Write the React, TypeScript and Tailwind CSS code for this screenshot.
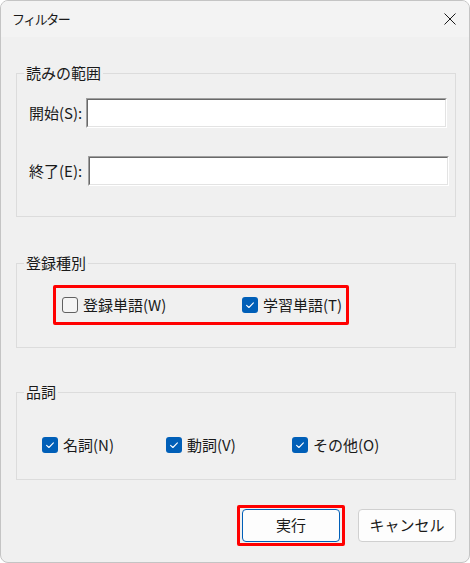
import React from 'react';

function CheckBox({ checked }: { checked: boolean }) {
  if (checked) {
    return (
      <span className="flex h-[16px] w-[16px] shrink-0 items-center justify-center rounded-[3px] bg-[#005fb8]">
        <svg width="16" height="16" viewBox="0 0 16 16" fill="none">
          <path d="M4.6 8.3 L6.9 10.5 L11.4 5.9" stroke="#ffffff" strokeWidth="1.1" strokeLinecap="round" strokeLinejoin="round" />
        </svg>
      </span>
    );
  }
  return <span className="h-[16px] w-[16px] shrink-0 rounded-[3px] border border-[#616161] bg-[#f5f5f5]" />;
}

function Check({ label, checked }: { label: string; checked: boolean }) {
  return (
    <label className="flex items-center gap-[5px] text-[15px] leading-[20px] text-[#1a1a1a]">
      <CheckBox checked={checked} />
      <span>{label}</span>
    </label>
  );
}

function Group({ title, children }: { title: string; children: React.ReactNode }) {
  return (
    <fieldset className="w-full border border-[#dcdcdc]">
      <legend className="ml-[7px] px-[2px] text-[15px] leading-[20px] text-[#1a1a1a]">{title}</legend>
      {children}
    </fieldset>
  );
}

function TextBox({ className }: { className: string }) {
  return (
    <div className={`h-[30px] border border-t-[#a0a0a0] border-l-[#a0a0a0] border-b-white border-r-white ${className}`}>
      <div className="h-full w-full border border-t-[#696969] border-l-[#696969] border-b-[#e3e3e3] border-r-[#e3e3e3] bg-white" />
    </div>
  );
}

export default function App() {
  return (
    <div className="h-[563px] w-[470px] bg-white font-['Noto_Sans_CJK_JP',sans-serif]">
      <div className="flex h-full w-full flex-col overflow-hidden rounded-[8px] border border-[#c4c4c4] bg-[#f0f0f0]">
        <div className="flex h-[36px] shrink-0 items-center justify-between bg-[#f3f3f3] pl-[11px] pr-[13px]">
          <span className="text-[13px] leading-[16px] tracking-[-1.5px] text-[#1a1a1a]">フィルター</span>
          <svg width="12" height="12" viewBox="0 0 12 12" fill="none">
            <path d="M0.5 0.5 L11.5 11.5 M11.5 0.5 L0.5 11.5" stroke="#1a1a1a" strokeWidth="1" />
          </svg>
        </div>

        <div className="flex flex-col pl-[15px] pr-[13px] pt-[26px]">
          <Group title="読みの範囲">
            <div className="flex flex-col gap-[28px] pb-[30px] pl-[12px] pt-[15px]">
              <div className="flex items-center">
                <span className="w-[57px] text-[15px] leading-[20px] text-[#1a1a1a]">開始(S):</span>
                <TextBox className="w-[361px]" />
              </div>
              <div className="flex items-center">
                <span className="w-[59px] text-[15px] leading-[20px] text-[#1a1a1a]">終了(E):</span>
                <TextBox className="w-[361px]" />
              </div>
            </div>
          </Group>

          <div className="mt-[36px]">
            <Group title="登録種別">
              <div className="pb-[22px] pl-[36px] pt-[12px]">
                <div className="flex h-[40px] w-[296px] items-center rounded-[2px] border-[3px] border-[#ff0000] pl-[6px]">
                  <div className="w-[180px]">
                    <Check label="登録単語(W)" checked={false} />
                  </div>
                  <Check label="学習単語(T)" checked={true} />
                </div>
              </div>
            </Group>
          </div>

          <div className="mt-[34px]">
            <Group title="品詞">
              <div className="flex pb-[24px] pl-[25px] pt-[33px]">
                <div className="w-[124px]">
                  <Check label="名詞(N)" checked={true} />
                </div>
                <div className="w-[126px]">
                  <Check label="動詞(V)" checked={true} />
                </div>
                <Check label="その他(O)" checked={true} />
              </div>
            </Group>
          </div>

          <div className="mt-[25px] flex items-center justify-end gap-[13px]">
            <div className="rounded-[2px] border-[3px] border-[#ff0000] px-[2px] py-[1px]">
              <button className="h-[33px] w-[98px] rounded-[4px] border border-[#005fb8] bg-[#fdfdfd] text-[15px] text-[#1a1a1a]">
                実行
              </button>
            </div>
            <button className="h-[33px] w-[98px] rounded-[4px] border border-[#d0d0d0] bg-[#fdfdfd] text-[15px] text-[#1a1a1a]">
              キャンセル
            </button>
          </div>
        </div>
      </div>
    </div>
  );
}
